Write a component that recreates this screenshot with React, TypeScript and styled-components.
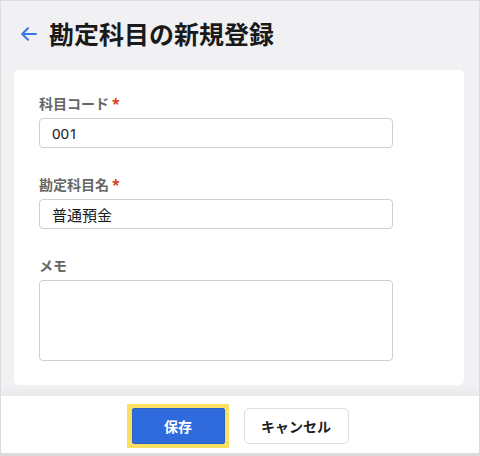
import styled, { createGlobalStyle } from "styled-components";

const GlobalStyle = createGlobalStyle`
  html, body {
    margin: 0;
    padding: 0;
    background: #ffffff;
  }
  * {
    box-sizing: border-box;
  }
`;

const Screen = styled.div`
  width: 480px;
  height: 456px;
  display: flex;
  flex-direction: column;
  background: #f1f1f3;
  border: 1px solid #dcdcdf;
  border-bottom-width: 3px;
  font-family: "Noto Sans", "Noto Sans CJK JP", sans-serif;
  color: #1d1d1f;
  overflow: hidden;
`;

const Header = styled.header`
  display: flex;
  align-items: center;
  gap: 12px;
  height: 69px;
  padding: 0 0 4px 19px;
`;

const BackButton = styled.button`
  display: flex;
  align-items: center;
  padding: 0;
  border: none;
  background: none;
  color: #3b78e0;
  cursor: pointer;
`;

const Title = styled.h1`
  margin: 0;
  font-size: 25px;
  font-weight: 700;
  line-height: 30px;
  color: #1a1a1a;
`;

const Card = styled.form`
  margin: 0 15px 0 13px;
  padding: 24px 25px 24px 25px;
  background: #ffffff;
  border-radius: 5px;
  display: flex;
  flex-direction: column;
  gap: 27px;
`;

const Field = styled.div`
  display: flex;
  flex-direction: column;
  gap: 4px;
`;

const Label = styled.label`
  font-size: 14px;
  font-weight: 700;
  line-height: 20px;
  color: #666666;
`;

const Required = styled.span`
  color: #d93a1f;
  margin-left: 3px;
`;

const TextInput = styled.input`
  width: 354px;
  height: 30px;
  padding: 0 12px;
  border: 1px solid #cfcfd2;
  border-radius: 4px;
  font-family: inherit;
  font-size: 15px;
  color: #1a1a1a;
  background: #ffffff;
  outline: none;
`;

const Memo = styled.textarea`
  width: 354px;
  height: 81px;
  padding: 6px 12px;
  border: 1px solid #cfcfd2;
  border-radius: 4px;
  font-family: inherit;
  font-size: 15px;
  resize: none;
  outline: none;
`;

const Footer = styled.footer`
  margin-top: 11px;
  flex: 1;
  display: flex;
  justify-content: center;
  align-items: flex-start;
  gap: 15px;
  padding: 8px 5px 0 0;
  background: #ffffff;
  box-shadow: 0 -5px 8px rgba(0, 0, 0, 0.04);
`;

const FocusRing = styled.span`
  display: flex;
  padding: 4px 4px 4px 5px;
  background: #f9df62;
`;

const Button = styled.button<{ $primary?: boolean }>`
  height: 36px;
  border-radius: 5px;
  font-family: inherit;
  font-size: 14px;
  font-weight: 700;
  cursor: pointer;
  ${({ $primary }) =>
    $primary
      ? `
    width: 93px;
    background: #2f6bdc;
    border: 1px solid #2a5fc4;
    color: #ffffff;
    border-radius: 2px;
  `
      : `
    width: 105px;
    margin-top: 4px;
    background: #ffffff;
    border: 1px solid #dedee0;
    color: #1d1d1f;
  `}
`;

const App = () => {
  return (
    <>
      <GlobalStyle />
      <Screen>
        <Header>
          <BackButton aria-label="戻る">
            <svg width="17" height="14" viewBox="0 0 17 14" fill="none">
              <path
                d="M16 7H2.5M8 1.2L2.2 7L8 12.8"
                stroke="currentColor"
                strokeWidth="2"
                strokeLinecap="round"
                strokeLinejoin="round"
              />
            </svg>
          </BackButton>
          <Title>勘定科目の新規登録</Title>
        </Header>
        <Card>
          <Field>
            <Label>
              科目コード<Required>*</Required>
            </Label>
            <TextInput defaultValue="001" />
          </Field>
          <Field>
            <Label>
              勘定科目名<Required>*</Required>
            </Label>
            <TextInput defaultValue="普通預金" />
          </Field>
          <Field>
            <Label>メモ</Label>
            <Memo />
          </Field>
        </Card>
        <Footer>
          <FocusRing>
            <Button $primary>保存</Button>
          </FocusRing>
          <Button>キャンセル</Button>
        </Footer>
      </Screen>
    </>
  );
};

export default App;
